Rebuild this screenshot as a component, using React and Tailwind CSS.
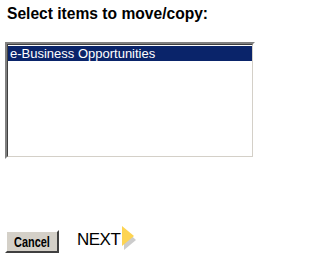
import React from 'react';

const NextArrow = () => (
  <svg width="16" height="24" viewBox="0 0 16 24" className="block">
    <polygon points="3,3 15,14 3,24" fill="#9a9a9a" opacity="0.5" />
    <polygon points="1,0 13,10 1,20" fill="#fdd452" />
  </svg>
);

const App = () => {
  return (
    <div className="w-[268px] h-[261px] bg-white px-[5px] font-['Liberation_Sans',Arial,sans-serif]">
      <h1 className="pt-[4px] pl-[2px] text-[15.6px] leading-[20px] font-bold text-black">
        Select items to move/copy:
      </h1>

      <div className="mt-[18px] w-[250px] h-[117px] border-2 border-t-[#808080] border-l-[#808080] border-b-white border-r-white">
        <div className="h-full border border-t-[#404040] border-l-[#404040] border-b-[#d4d0c8] border-r-[#d4d0c8] bg-white pt-[1px]">
          <div className="h-[15px] bg-[#0a246a] text-white text-[13px] leading-[15px] pl-[2px]">
            e-Business Opportunities
          </div>
        </div>
      </div>

      <div className="mt-[71px] flex items-start">
        <button className="w-[54px] h-[23px] bg-[#d4d0c8] border-2 border-t-white border-l-white border-b-[#404040] border-r-[#404040] text-black leading-none flex items-center justify-center">
          <span className="inline-block text-[14px] font-bold scale-x-[0.78]">Cancel</span>
        </button>
        <div className="ml-[18px] -mt-[4px] flex items-start">
          <span className="mt-[4px] text-[17px] leading-[20px] tracking-[-0.5px] text-black">NEXT</span>
          <div className="ml-[1px]">
            <NextArrow />
          </div>
        </div>
      </div>
    </div>
  );
};

export default App;
